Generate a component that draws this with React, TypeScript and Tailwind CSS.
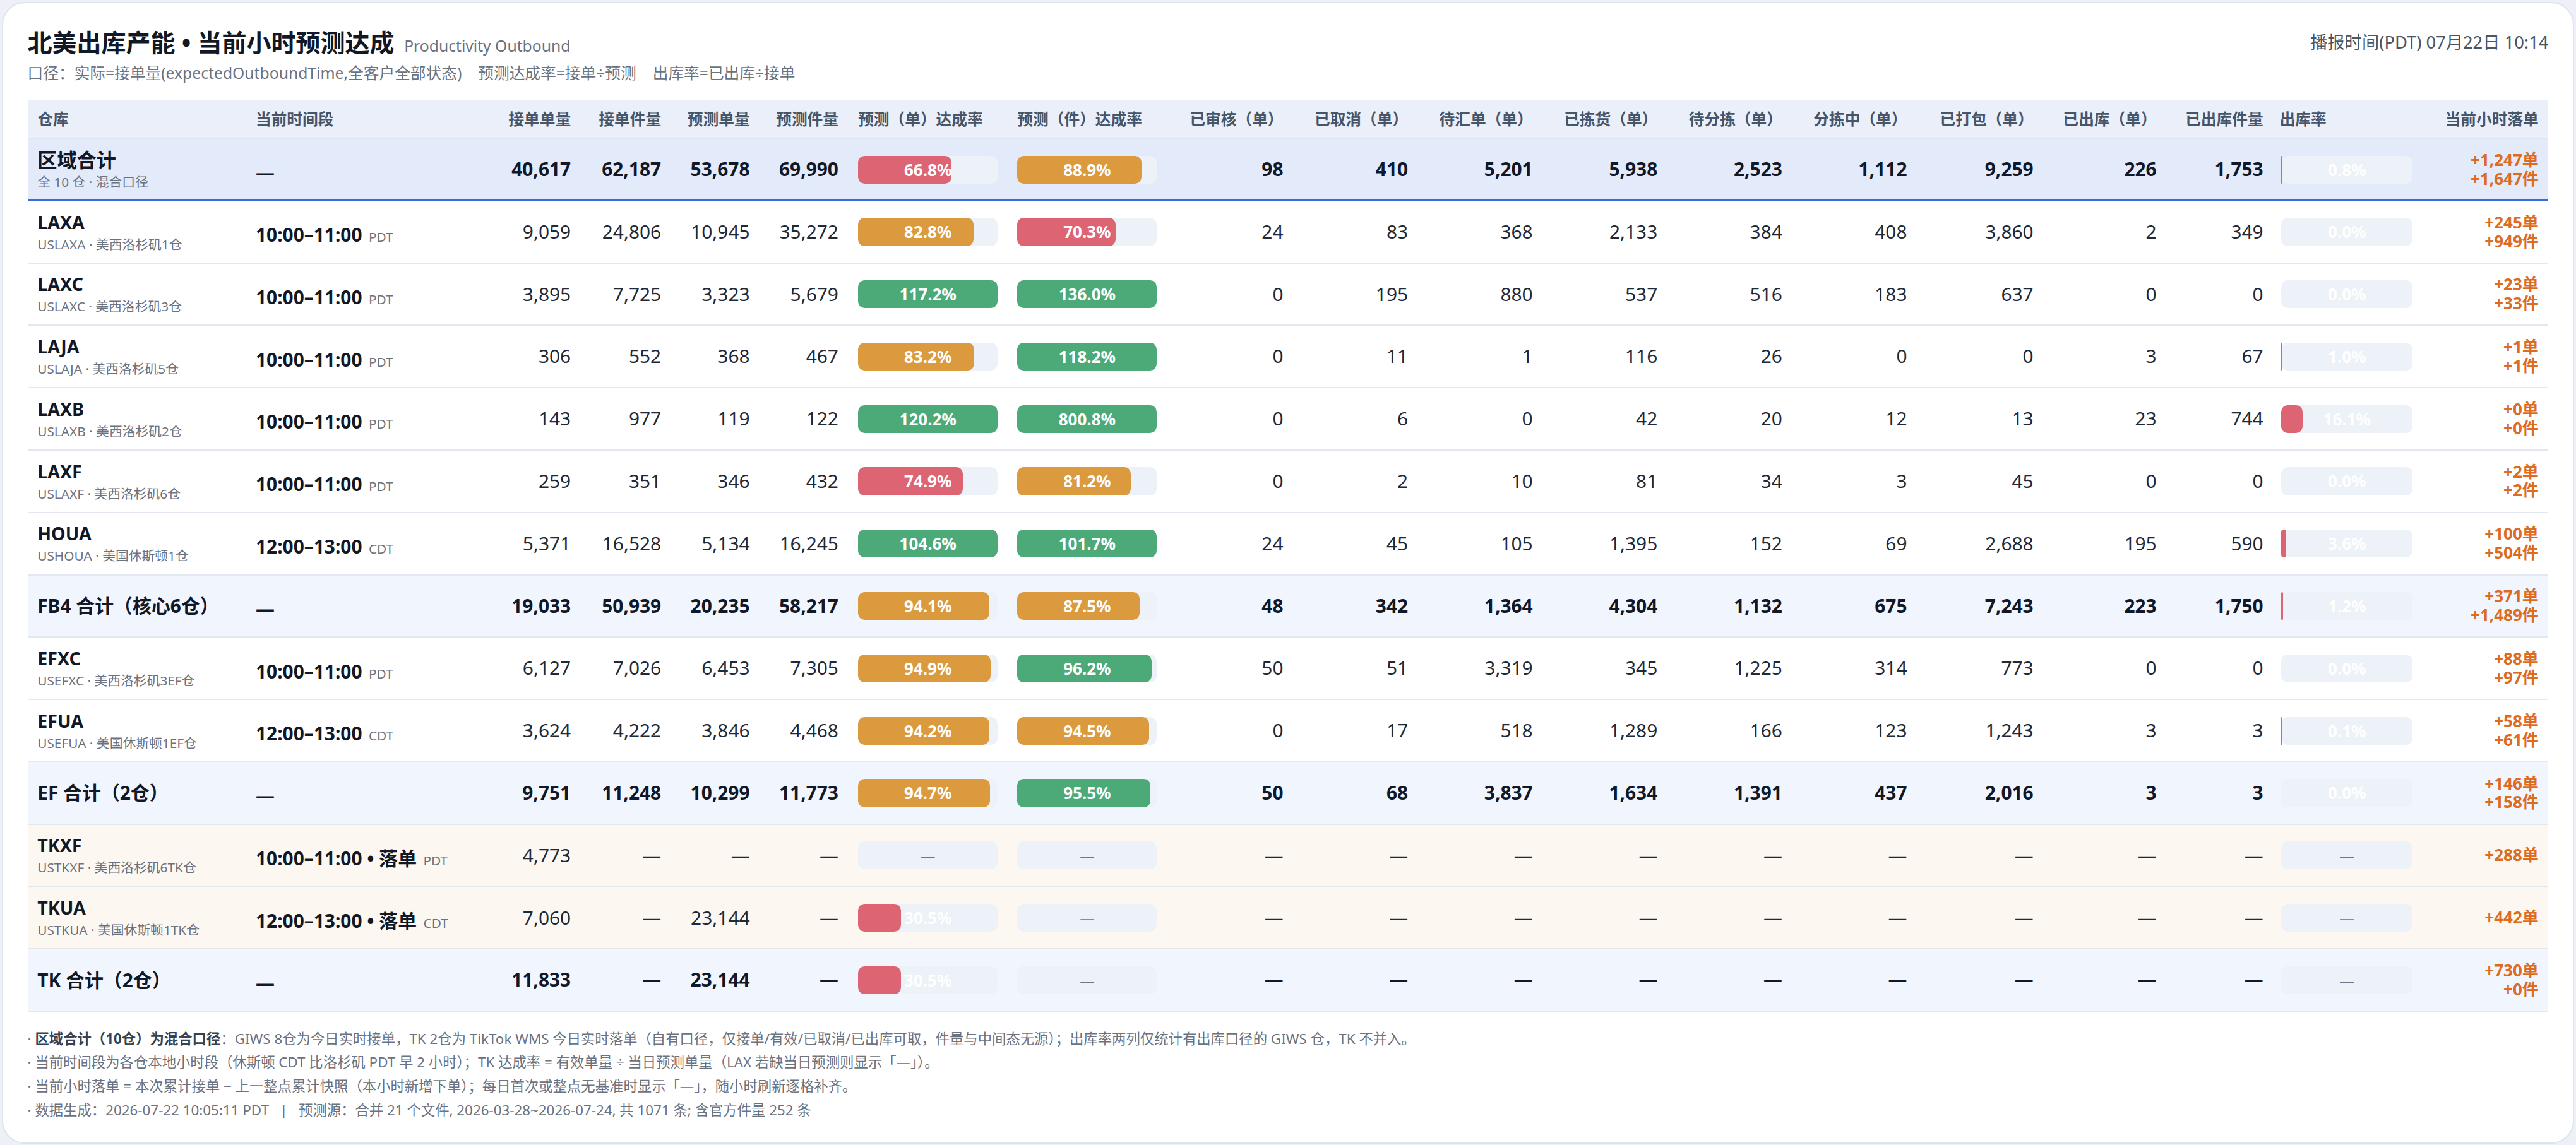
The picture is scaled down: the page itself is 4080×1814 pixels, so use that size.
import React from "react";

type Row = {
  kind: "region" | "wh" | "sum" | "tk";
  name: string;
  sub?: string;
  time?: string;
  tz?: string;
  nums: string[];
  r1: number | null;
  r2: number | null;
  ops: string[];
  out: number | null;
  d1: string;
  d2?: string;
};

const D = "—";
const dashes = [D, D, D, D, D, D, D, D, D];

const rows: Row[] = [
  { kind: "region", name: "区域合计", sub: "全 10 仓 · 混合口径", nums: ["40,617", "62,187", "53,678", "69,990"], r1: 66.8, r2: 88.9, ops: ["98", "410", "5,201", "5,938", "2,523", "1,112", "9,259", "226", "1,753"], out: 0.8, d1: "+1,247单", d2: "+1,647件" },
  { kind: "wh", name: "LAXA", sub: "USLAXA · 美西洛杉矶1仓", time: "10:00–11:00", tz: "PDT", nums: ["9,059", "24,806", "10,945", "35,272"], r1: 82.8, r2: 70.3, ops: ["24", "83", "368", "2,133", "384", "408", "3,860", "2", "349"], out: 0.0, d1: "+245单", d2: "+949件" },
  { kind: "wh", name: "LAXC", sub: "USLAXC · 美西洛杉矶3仓", time: "10:00–11:00", tz: "PDT", nums: ["3,895", "7,725", "3,323", "5,679"], r1: 117.2, r2: 136.0, ops: ["0", "195", "880", "537", "516", "183", "637", "0", "0"], out: 0.0, d1: "+23单", d2: "+33件" },
  { kind: "wh", name: "LAJA", sub: "USLAJA · 美西洛杉矶5仓", time: "10:00–11:00", tz: "PDT", nums: ["306", "552", "368", "467"], r1: 83.2, r2: 118.2, ops: ["0", "11", "1", "116", "26", "0", "0", "3", "67"], out: 1.0, d1: "+1单", d2: "+1件" },
  { kind: "wh", name: "LAXB", sub: "USLAXB · 美西洛杉矶2仓", time: "10:00–11:00", tz: "PDT", nums: ["143", "977", "119", "122"], r1: 120.2, r2: 800.8, ops: ["0", "6", "0", "42", "20", "12", "13", "23", "744"], out: 16.1, d1: "+0单", d2: "+0件" },
  { kind: "wh", name: "LAXF", sub: "USLAXF · 美西洛杉矶6仓", time: "10:00–11:00", tz: "PDT", nums: ["259", "351", "346", "432"], r1: 74.9, r2: 81.2, ops: ["0", "2", "10", "81", "34", "3", "45", "0", "0"], out: 0.0, d1: "+2单", d2: "+2件" },
  { kind: "wh", name: "HOUA", sub: "USHOUA · 美国休斯顿1仓", time: "12:00–13:00", tz: "CDT", nums: ["5,371", "16,528", "5,134", "16,245"], r1: 104.6, r2: 101.7, ops: ["24", "45", "105", "1,395", "152", "69", "2,688", "195", "590"], out: 3.6, d1: "+100单", d2: "+504件" },
  { kind: "sum", name: "FB4 合计（核心6仓）", nums: ["19,033", "50,939", "20,235", "58,217"], r1: 94.1, r2: 87.5, ops: ["48", "342", "1,364", "4,304", "1,132", "675", "7,243", "223", "1,750"], out: 1.2, d1: "+371单", d2: "+1,489件" },
  { kind: "wh", name: "EFXC", sub: "USEFXC · 美西洛杉矶3EF仓", time: "10:00–11:00", tz: "PDT", nums: ["6,127", "7,026", "6,453", "7,305"], r1: 94.9, r2: 96.2, ops: ["50", "51", "3,319", "345", "1,225", "314", "773", "0", "0"], out: 0.0, d1: "+88单", d2: "+97件" },
  { kind: "wh", name: "EFUA", sub: "USEFUA · 美国休斯顿1EF仓", time: "12:00–13:00", tz: "CDT", nums: ["3,624", "4,222", "3,846", "4,468"], r1: 94.2, r2: 94.5, ops: ["0", "17", "518", "1,289", "166", "123", "1,243", "3", "3"], out: 0.1, d1: "+58单", d2: "+61件" },
  { kind: "sum", name: "EF 合计（2仓）", nums: ["9,751", "11,248", "10,299", "11,773"], r1: 94.7, r2: 95.5, ops: ["50", "68", "3,837", "1,634", "1,391", "437", "2,016", "3", "3"], out: 0.0, d1: "+146单", d2: "+158件" },
  { kind: "tk", name: "TKXF", sub: "USTKXF · 美西洛杉矶6TK仓", time: "10:00–11:00", tz: "PDT", nums: ["4,773", D, D, D], r1: null, r2: null, ops: dashes, out: null, d1: "+288单" },
  { kind: "tk", name: "TKUA", sub: "USTKUA · 美国休斯顿1TK仓", time: "12:00–13:00", tz: "CDT", nums: ["7,060", D, "23,144", D], r1: 30.5, r2: null, ops: dashes, out: null, d1: "+442单" },
  { kind: "sum", name: "TK 合计（2仓）", nums: ["11,833", D, "23,144", D], r1: 30.5, r2: null, ops: dashes, out: null, d1: "+730单", d2: "+0件" },
];

const headers = ["接单单量", "接单件量", "预测单量", "预测件量"];
const opHeaders = [
  "已审核（单）", "已取消（单）", "待汇单（单）", "已拣货（单）", "待分拣（单）",
  "分拣中（单）", "已打包（单）", "已出库（单）", "已出库件量",
];

const rateColor = (v: number) =>
  v >= 95 ? "bg-[#4caa78]" : v >= 80 ? "bg-[#dc9a3e]" : "bg-[#dd6472]";

const Bar = ({ value, out }: { value: number | null; out?: boolean }) => (
  <div className="relative h-[17px] rounded-[4px] bg-[#edf1f8]">
    {value !== null && (
      <div
        className={`absolute inset-y-0 left-0 rounded-[4px] ${out ? "bg-[#dd6472]" : rateColor(value)}`}
        style={{ width: `${Math.min(value, 100)}%` }}
      />
    )}
    {value !== null ? (
      <div className="relative text-center text-[10px] font-bold leading-[17px] text-white">
        {value.toFixed(1)}%
      </div>
    ) : (
      <div className="relative text-center text-[9px] leading-[17px] text-[#6b778a]">—</div>
    )}
  </div>
);

const rowBg = {
  region: "h-[37.5px] bg-[#e3eafa] border-b-[1.5px] border-[#3a6bdc]",
  wh: "h-[38px] bg-white border-b border-[#e2e7f0]",
  sum: "h-[38px] bg-[#f1f5fe] border-b border-[#e2e7f0]",
  tk: "h-[38px] bg-[#fcf8f1] border-b border-[#e2e7f0]",
};

export default function App() {
  return (
    <div className="h-[698px] bg-[#edf0f6] p-px font-['Noto_Sans','Noto_Sans_CJK_SC',sans-serif] text-[#1f2937] [zoom:2.6]">
      <div className="flex h-full flex-col rounded-[14px] border border-[#dde3ec] bg-white px-[15px] pt-[14px]">
        {/* Title */}
        <div className="flex items-center justify-between">
          <div className="flex items-baseline gap-[6px]">
            <h1 className="text-[15px] font-bold leading-[20px] text-[#111827]">北美出库产能 • 当前小时预测达成</h1>
            <span className="text-[9.5px] text-[#6b7280]">Productivity Outbound</span>
          </div>
          <div className="text-[10.5px] text-[#4b5563]">播报时间(PDT) 07月22日 10:14</div>
        </div>
        <div className="mt-[2px] flex gap-[10px] text-[9.5px] leading-[14px] text-[#6b7280]">
          <span>口径：实际=接单量(expectedOutboundTime,全客户全部状态)</span>
          <span>预测达成率=接单÷预测</span>
          <span>出库率=已出库÷接单</span>
        </div>

        {/* Table */}
        <table className="mt-[9px] w-full table-fixed border-collapse">
          <colgroup>
            <col className="w-[133px]" />
            <col className="w-[149px]" />
            <col className="w-[55px]" />
            <col className="w-[55px]" />
            <col className="w-[54px]" />
            <col className="w-[54px]" />
            <col className="w-[97px]" />
            <col className="w-[97px]" />
            <col className="w-[77px]" />
            <col className="w-[76px]" />
            <col className="w-[76px]" />
            <col className="w-[76px]" />
            <col className="w-[76px]" />
            <col className="w-[76px]" />
            <col className="w-[77px]" />
            <col className="w-[75px]" />
            <col className="w-[65px]" />
            <col className="w-[91px]" />
            <col />
          </colgroup>
          <thead>
            <tr className="h-[24px] border-b border-[#e0e6f0] bg-[#eaeffa] text-[9.5px] font-bold text-[#475569]">
              <th className="px-[6px] text-left">仓库</th>
              <th className="px-[6px] text-left">当前时间段</th>
              {headers.map((h) => (
                <th key={h} className="px-[6px] text-right">{h}</th>
              ))}
              <th className="px-[6px] text-left">预测（单）达成率</th>
              <th className="px-[6px] text-left">预测（件）达成率</th>
              {opHeaders.map((h) => (
                <th key={h} className="px-[6px] text-right">{h}</th>
              ))}
              <th className="px-[4px] text-left">出库率</th>
              <th className="px-[6px] text-right">当前小时落单</th>
            </tr>
          </thead>
          <tbody>
            {rows.map((r) => {
              const strong = r.kind === "region" || r.kind === "sum";
              const numCls = `px-[6px] text-right text-[11.5px] ${strong ? "font-bold text-[#111827]" : "text-[#1f2937]"}`;
              return (
                <tr key={r.name} className={rowBg[r.kind]}>
                  <td className="px-[6px]">
                    <div className={`font-bold leading-[14px] text-[#111827] ${r.kind === "region" ? "text-[12px]" : r.kind === "sum" ? "text-[11.5px]" : "text-[11px]"}`}>
                      {r.name}
                    </div>
                    {r.sub && <div className="mt-[1px] text-[8px] leading-[11px] text-[#6b7280]">{r.sub}</div>}
                  </td>
                  <td className="px-[6px]">
                    {r.time ? (
                      <span className="text-[11.5px] font-bold text-[#111827]">
                        {r.time}
                        {r.kind === "tk" && " • 落单"}
                        <span className="ml-[4px] text-[8px] font-normal text-[#6b7280]">{r.tz}</span>
                      </span>
                    ) : (
                      <span className="text-[11.5px] font-bold text-[#111827]">—</span>
                    )}
                  </td>
                  {r.nums.map((n, i) => (
                    <td key={i} className={numCls}>{n}</td>
                  ))}
                  <td className="px-[6px]">
                    <Bar value={r.r1} />
                  </td>
                  <td className="px-[6px]">
                    <Bar value={r.r2} />
                  </td>
                  {r.ops.map((n, i) => (
                    <td key={i} className={numCls}>{n}</td>
                  ))}
                  <td className="pl-[5px] pr-[6px]">
                    <Bar value={r.out} out />
                  </td>
                  <td className="px-[6px] text-right text-[10px] font-bold leading-[11.5px] text-[#dd6b20]">
                    <div>{r.d1}</div>
                    {r.d2 && <div>{r.d2}</div>}
                  </td>
                </tr>
              );
            })}
          </tbody>
        </table>

        {/* Notes */}
        <div className="mt-[9px] text-[8.6px] leading-[14.5px] text-[#6b7280]">
          <p>
            · <b className="font-bold text-[#374151]">区域合计（10仓）为混合口径</b>：GIWS 8仓为今日实时接单，TK 2仓为 TikTok WMS 今日实时落单（自有口径，仅接单/有效/已取消/已出库可取，件量与中间态无源）；出库率两列仅统计有出库口径的 GIWS 仓，TK 不并入。
          </p>
          <p>· 当前时间段为各仓本地小时段（休斯顿 CDT 比洛杉矶 PDT 早 2 小时）；TK 达成率 = 有效单量 ÷ 当日预测单量（LAX 若缺当日预测则显示「—」）。</p>
          <p>· 当前小时落单 = 本次累计接单 − 上一整点累计快照（本小时新增下单）；每日首次或整点无基准时显示「—」，随小时刷新逐格补齐。</p>
          <p className="whitespace-pre">· 数据生成：2026-07-22 10:05:11 PDT   |   预测源：合并 21 个文件, 2026-03-28~2026-07-24, 共 1071 条; 含官方件量 252 条</p>
        </div>
      </div>
    </div>
  );
}
